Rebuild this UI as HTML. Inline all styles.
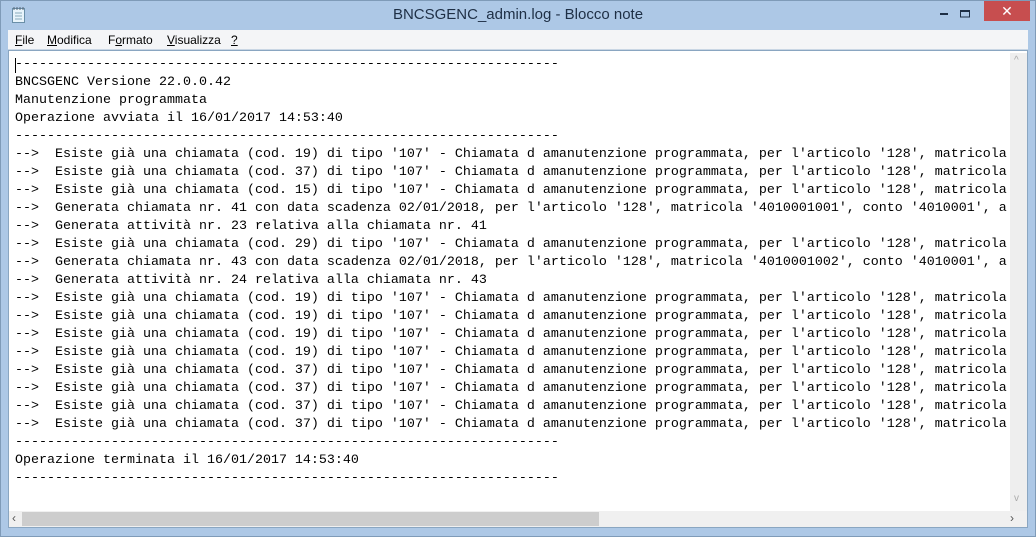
<!DOCTYPE html>
<html><head><meta charset="utf-8"><style>
*{margin:0;padding:0;box-sizing:border-box}
body{width:1036px;height:537px;background:#adc8e6;position:relative;overflow:hidden;font-family:"Liberation Sans",sans-serif}
.frame{position:absolute;inset:0;border:1px solid #7f9bb8}
.title{position:absolute;top:6px;left:0;width:1036px;text-align:center;font-size:15px;color:#1e2f45}
.close{position:absolute;left:984px;top:1px;width:46px;height:20px;background:#c74e4f;color:#fff;text-align:center;font-size:14px;line-height:20px}
.menu{position:absolute;left:8px;top:30px;width:1020px;height:20px;background:#f4f5f7;border-bottom:1px solid #c9d6e4;font-size:12px;color:#000}
.menu span{position:absolute;top:3px}
.edit{position:absolute;left:8px;top:50px;width:1020px;height:478px;background:#fff;border:1px solid #8aa6c1}
pre{position:absolute;left:6px;top:5px;font-family:"Liberation Mono",monospace;font-size:13.33px;line-height:18px;color:#000;white-space:pre}
.vs{position:absolute;left:1001px;top:2px;width:17px;height:458px;background:#eeeeee}
.hs{position:absolute;left:0;top:460px;width:1018px;height:16px;background:#f0f0f0}
.thumb{position:absolute;left:13px;top:1px;width:577px;height:14px;background:#cdcdcd}
.cur{position:absolute;left:6px;top:7px;width:1px;height:15px;background:#000}
</style></head><body>
<div class="frame"></div>
<svg style="position:absolute;left:11px;top:6px" width="16" height="18"><rect x="1.5" y="2.5" width="12" height="14" fill="#e8f4fb" stroke="#6a8fa8"/><path d="M4 7h7M4 10h7M4 13h7" stroke="#8ab" /><path d="M3 1v3M6 1v3M9 1v3M12 1v3" stroke="#567"/></svg>
<div class="title">BNCSGENC_admin.log - Blocco note</div>
<svg style="position:absolute;left:940px;top:10px" width="30" height="8"><rect x="0" y="3" width="8" height="2" fill="#1e2f45"/><rect x="20.5" y="0" width="9" height="7" fill="none" stroke="#1e2f45"/><rect x="20" y="0" width="10" height="2" fill="#1e2f45"/></svg>
<div class="close">✕</div>
<div class="menu"><span style="left:7px"><u>F</u>ile</span><span style="left:39px"><u>M</u>odifica</span><span style="left:100px">F<u>o</u>rmato</span><span style="left:159px"><u>V</u>isualizza</span><span style="left:223px"><u>?</u></span></div>
<div class="edit">
<pre>--------------------------------------------------------------------
BNCSGENC Versione 22.0.0.42
Manutenzione programmata
Operazione avviata il 16/01/2017 14:53:40
--------------------------------------------------------------------
-->  Esiste già una chiamata (cod. 19) di tipo '107' - Chiamata d amanutenzione programmata, per l'articolo '128', matricola
-->  Esiste già una chiamata (cod. 37) di tipo '107' - Chiamata d amanutenzione programmata, per l'articolo '128', matricola
-->  Esiste già una chiamata (cod. 15) di tipo '107' - Chiamata d amanutenzione programmata, per l'articolo '128', matricola
-->  Generata chiamata nr. 41 con data scadenza 02/01/2018, per l'articolo '128', matricola '4010001001', conto '4010001', a
-->  Generata attività nr. 23 relativa alla chiamata nr. 41
-->  Esiste già una chiamata (cod. 29) di tipo '107' - Chiamata d amanutenzione programmata, per l'articolo '128', matricola
-->  Generata chiamata nr. 43 con data scadenza 02/01/2018, per l'articolo '128', matricola '4010001002', conto '4010001', a
-->  Generata attività nr. 24 relativa alla chiamata nr. 43
-->  Esiste già una chiamata (cod. 19) di tipo '107' - Chiamata d amanutenzione programmata, per l'articolo '128', matricola
-->  Esiste già una chiamata (cod. 19) di tipo '107' - Chiamata d amanutenzione programmata, per l'articolo '128', matricola
-->  Esiste già una chiamata (cod. 19) di tipo '107' - Chiamata d amanutenzione programmata, per l'articolo '128', matricola
-->  Esiste già una chiamata (cod. 19) di tipo '107' - Chiamata d amanutenzione programmata, per l'articolo '128', matricola
-->  Esiste già una chiamata (cod. 37) di tipo '107' - Chiamata d amanutenzione programmata, per l'articolo '128', matricola
-->  Esiste già una chiamata (cod. 37) di tipo '107' - Chiamata d amanutenzione programmata, per l'articolo '128', matricola
-->  Esiste già una chiamata (cod. 37) di tipo '107' - Chiamata d amanutenzione programmata, per l'articolo '128', matricola
-->  Esiste già una chiamata (cod. 37) di tipo '107' - Chiamata d amanutenzione programmata, per l'articolo '128', matricola
--------------------------------------------------------------------
Operazione terminata il 16/01/2017 14:53:40
--------------------------------------------------------------------</pre>
<div class="cur"></div>
<div class="vs"><span style="position:absolute;left:4px;top:2px;font-size:10px;color:#aaa">^</span><span style="position:absolute;left:4px;top:440px;font-size:10px;color:#aaa">v</span></div>
<div class="hs"><div class="thumb"></div><span style="position:absolute;left:3px;top:0;font-size:12px;color:#555">‹</span><span style="position:absolute;left:1001px;top:0;font-size:12px;color:#555">›</span></div>
</div>
</body></html>
